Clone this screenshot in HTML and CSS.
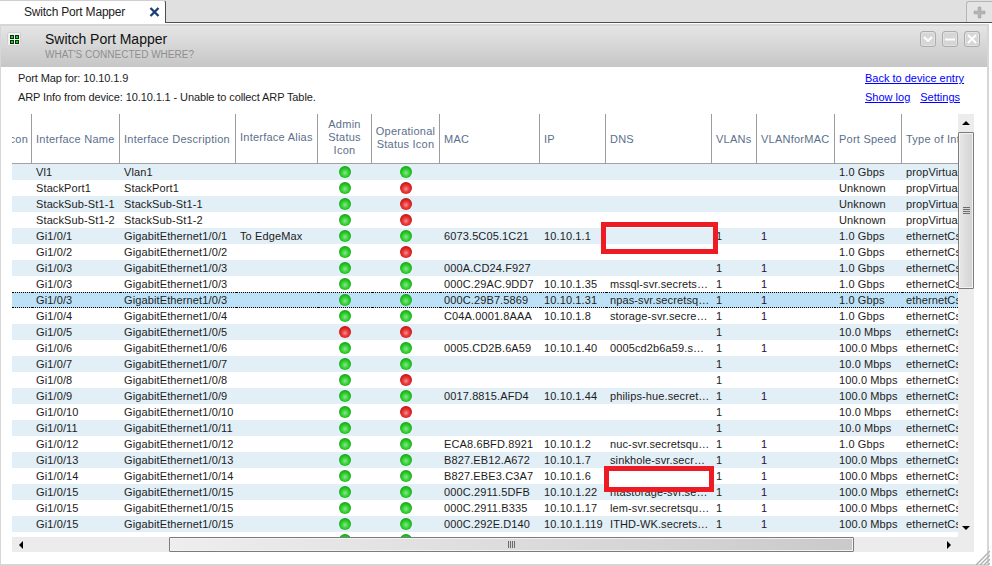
FILE: index.html
```html
<!DOCTYPE html>
<html lang="en">
<head>
<meta charset="utf-8">
<title>Switch Port Mapper</title>
<link rel="stylesheet" href="styles.css">
</head>
<body>
<div class="tabbar">
  <div class="tab"><span class="tab-label">Switch Port Mapper</span>
    <svg class="tab-close" width="11" height="10" viewBox="0 0 11 10"><path d="M1.5 1 9.5 9M9.5 1 1.5 9" stroke="#1d3f78" stroke-width="2.4" fill="none"/></svg>
  </div>
  <div class="tab-add"><svg width="13" height="13" viewBox="0 0 13 13"><path d="M5 1h3v4h4v3H8v4H5V8H1V5h4z" fill="#b4b4b4" stroke="#a0a0a0" stroke-width=".5"/></svg></div>
</div>
<div class="window">
  <header class="head">
    <div class="head-icon"><i></i><i></i><i></i><i></i></div>
    <div class="head-titles">
      <div class="head-title">Switch Port Mapper</div>
      <div class="head-sub">WHAT'S CONNECTED WHERE?</div>
    </div>
    <div class="head-btns">
      <div class="hbtn"><svg width="10" height="6" viewBox="0 0 10 6"><path d="M1 1 5 5 9 1" stroke="#fff" stroke-width="2" fill="none"/></svg></div>
      <div class="hbtn"><svg width="10" height="3" viewBox="0 0 10 3"><path d="M0 1.5h10" stroke="#fff" stroke-width="2"/></svg></div>
      <div class="hbtn"><svg width="10" height="10" viewBox="0 0 10 10"><path d="M1 1 9 9M9 1 1 9" stroke="#fff" stroke-width="2" fill="none"/></svg></div>
    </div>
  </header>
  <main class="content">
    <div class="info">
      <div class="info-left">
        <div>Port Map for: 10.10.1.9</div>
        <div>ARP Info from device: 10.10.1.1 - Unable to collect ARP Table.</div>
      </div>
      <div class="info-right">
        <div><a href="#">Back to device entry</a></div>
        <div class="links-2"><a href="#">Show log</a><a href="#">Settings</a></div>
      </div>
    </div>
    <div class="grid">
      <div class="viewport">
        <table class="ports">
          <colgroup>
            <col class="c0"><col class="c1"><col class="c2"><col class="c3"><col class="c4"><col class="c5"><col class="c6"><col class="c7"><col class="c8"><col class="c9"><col class="c10"><col class="c11"><col class="c12">
          </colgroup>
          <thead>
            <tr>
              <th><div class="clip-left">Status Icon</div></th>
              <th>Interface Name</th>
              <th>Interface Description</th>
              <th class="th-up">Interface Alias</th>
              <th class="ctr">Admin<br>Status<br>Icon</th>
              <th class="ctr">Operational<br>Status Icon</th>
              <th>MAC</th>
              <th>IP</th>
              <th>DNS</th>
              <th>VLANs</th>
              <th>VLANforMAC</th>
              <th>Port Speed</th>
              <th>Type of Interface</th>
            </tr>
          </thead>
          <tbody>
            <tr class="alt"><td></td><td>Vl1</td><td>Vlan1</td><td></td><td class="ctr"><span class="dot g"></span></td><td class="ctr"><span class="dot g"></span></td><td></td><td></td><td></td><td></td><td></td><td>1.0 Gbps</td><td>propVirtual</td></tr>
            <tr><td></td><td>StackPort1</td><td>StackPort1</td><td></td><td class="ctr"><span class="dot g"></span></td><td class="ctr"><span class="dot r"></span></td><td></td><td></td><td></td><td></td><td></td><td>Unknown</td><td>propVirtual</td></tr>
            <tr class="alt"><td></td><td>StackSub-St1-1</td><td>StackSub-St1-1</td><td></td><td class="ctr"><span class="dot g"></span></td><td class="ctr"><span class="dot r"></span></td><td></td><td></td><td></td><td></td><td></td><td>Unknown</td><td>propVirtual</td></tr>
            <tr><td></td><td>StackSub-St1-2</td><td>StackSub-St1-2</td><td></td><td class="ctr"><span class="dot g"></span></td><td class="ctr"><span class="dot r"></span></td><td></td><td></td><td></td><td></td><td></td><td>Unknown</td><td>propVirtual</td></tr>
            <tr class="alt"><td></td><td>Gi1/0/1</td><td>GigabitEthernet1/0/1</td><td>To EdgeMax</td><td class="ctr"><span class="dot g"></span></td><td class="ctr"><span class="dot g"></span></td><td>6073.5C05.1C21</td><td>10.10.1.1</td><td></td><td>1</td><td>1</td><td>1.0 Gbps</td><td>ethernetCsmacd</td></tr>
            <tr><td></td><td>Gi1/0/2</td><td>GigabitEthernet1/0/2</td><td></td><td class="ctr"><span class="dot g"></span></td><td class="ctr"><span class="dot r"></span></td><td></td><td></td><td></td><td></td><td></td><td>1.0 Gbps</td><td>ethernetCsmacd</td></tr>
            <tr class="alt"><td></td><td>Gi1/0/3</td><td>GigabitEthernet1/0/3</td><td></td><td class="ctr"><span class="dot g"></span></td><td class="ctr"><span class="dot g"></span></td><td>000A.CD24.F927</td><td></td><td></td><td>1</td><td>1</td><td>1.0 Gbps</td><td>ethernetCsmacd</td></tr>
            <tr><td></td><td>Gi1/0/3</td><td>GigabitEthernet1/0/3</td><td></td><td class="ctr"><span class="dot g"></span></td><td class="ctr"><span class="dot g"></span></td><td>000C.29AC.9DD7</td><td>10.10.1.35</td><td>mssql-svr.secrets…</td><td>1</td><td>1</td><td>1.0 Gbps</td><td>ethernetCsmacd</td></tr>
            <tr class="sel"><td></td><td>Gi1/0/3</td><td>GigabitEthernet1/0/3</td><td></td><td class="ctr"><span class="dot g"></span></td><td class="ctr"><span class="dot g"></span></td><td>000C.29B7.5869</td><td>10.10.1.31</td><td>npas-svr.secretsq…</td><td>1</td><td>1</td><td>1.0 Gbps</td><td>ethernetCsmacd</td></tr>
            <tr><td></td><td>Gi1/0/4</td><td>GigabitEthernet1/0/4</td><td></td><td class="ctr"><span class="dot g"></span></td><td class="ctr"><span class="dot g"></span></td><td>C04A.0001.8AAA</td><td>10.10.1.8</td><td>storage-svr.secre…</td><td>1</td><td>1</td><td>1.0 Gbps</td><td>ethernetCsmacd</td></tr>
            <tr class="alt"><td></td><td>Gi1/0/5</td><td>GigabitEthernet1/0/5</td><td></td><td class="ctr"><span class="dot r"></span></td><td class="ctr"><span class="dot r"></span></td><td></td><td></td><td></td><td>1</td><td></td><td>10.0 Mbps</td><td>ethernetCsmacd</td></tr>
            <tr><td></td><td>Gi1/0/6</td><td>GigabitEthernet1/0/6</td><td></td><td class="ctr"><span class="dot g"></span></td><td class="ctr"><span class="dot g"></span></td><td>0005.CD2B.6A59</td><td>10.10.1.40</td><td>0005cd2b6a59.s…</td><td>1</td><td>1</td><td>100.0 Mbps</td><td>ethernetCsmacd</td></tr>
            <tr class="alt"><td></td><td>Gi1/0/7</td><td>GigabitEthernet1/0/7</td><td></td><td class="ctr"><span class="dot g"></span></td><td class="ctr"><span class="dot g"></span></td><td></td><td></td><td></td><td>1</td><td></td><td>10.0 Mbps</td><td>ethernetCsmacd</td></tr>
            <tr><td></td><td>Gi1/0/8</td><td>GigabitEthernet1/0/8</td><td></td><td class="ctr"><span class="dot g"></span></td><td class="ctr"><span class="dot r"></span></td><td></td><td></td><td></td><td>1</td><td></td><td>100.0 Mbps</td><td>ethernetCsmacd</td></tr>
            <tr class="alt"><td></td><td>Gi1/0/9</td><td>GigabitEthernet1/0/9</td><td></td><td class="ctr"><span class="dot g"></span></td><td class="ctr"><span class="dot g"></span></td><td>0017.8815.AFD4</td><td>10.10.1.44</td><td>philips-hue.secret…</td><td>1</td><td>1</td><td>100.0 Mbps</td><td>ethernetCsmacd</td></tr>
            <tr><td></td><td>Gi1/0/10</td><td>GigabitEthernet1/0/10</td><td></td><td class="ctr"><span class="dot g"></span></td><td class="ctr"><span class="dot r"></span></td><td></td><td></td><td></td><td>1</td><td></td><td>10.0 Mbps</td><td>ethernetCsmacd</td></tr>
            <tr class="alt"><td></td><td>Gi1/0/11</td><td>GigabitEthernet1/0/11</td><td></td><td class="ctr"><span class="dot g"></span></td><td class="ctr"><span class="dot g"></span></td><td></td><td></td><td></td><td>1</td><td></td><td>10.0 Mbps</td><td>ethernetCsmacd</td></tr>
            <tr><td></td><td>Gi1/0/12</td><td>GigabitEthernet1/0/12</td><td></td><td class="ctr"><span class="dot g"></span></td><td class="ctr"><span class="dot g"></span></td><td>ECA8.6BFD.8921</td><td>10.10.1.2</td><td>nuc-svr.secretsqu…</td><td>1</td><td>1</td><td>1.0 Gbps</td><td>ethernetCsmacd</td></tr>
            <tr class="alt"><td></td><td>Gi1/0/13</td><td>GigabitEthernet1/0/13</td><td></td><td class="ctr"><span class="dot g"></span></td><td class="ctr"><span class="dot g"></span></td><td>B827.EB12.A672</td><td>10.10.1.7</td><td>sinkhole-svr.secr…</td><td>1</td><td>1</td><td>100.0 Mbps</td><td>ethernetCsmacd</td></tr>
            <tr><td></td><td>Gi1/0/14</td><td>GigabitEthernet1/0/14</td><td></td><td class="ctr"><span class="dot g"></span></td><td class="ctr"><span class="dot g"></span></td><td>B827.EBE3.C3A7</td><td>10.10.1.6</td><td></td><td>1</td><td>1</td><td>100.0 Mbps</td><td>ethernetCsmacd</td></tr>
            <tr class="alt"><td></td><td>Gi1/0/15</td><td>GigabitEthernet1/0/15</td><td></td><td class="ctr"><span class="dot g"></span></td><td class="ctr"><span class="dot g"></span></td><td>000C.2911.5DFB</td><td>10.10.1.22</td><td>ntastorage-svr.se…</td><td>1</td><td>1</td><td>100.0 Mbps</td><td>ethernetCsmacd</td></tr>
            <tr><td></td><td>Gi1/0/15</td><td>GigabitEthernet1/0/15</td><td></td><td class="ctr"><span class="dot g"></span></td><td class="ctr"><span class="dot g"></span></td><td>000C.2911.B335</td><td>10.10.1.17</td><td>lem-svr.secretsqu…</td><td>1</td><td>1</td><td>100.0 Mbps</td><td>ethernetCsmacd</td></tr>
            <tr class="alt"><td></td><td>Gi1/0/15</td><td>GigabitEthernet1/0/15</td><td></td><td class="ctr"><span class="dot g"></span></td><td class="ctr"><span class="dot g"></span></td><td>000C.292E.D140</td><td>10.10.1.119</td><td>ITHD-WK.secrets…</td><td>1</td><td>1</td><td>100.0 Mbps</td><td>ethernetCsmacd</td></tr>
            <tr><td></td><td></td><td></td><td></td><td class="ctr"><span class="dot g"></span></td><td class="ctr"><span class="dot g"></span></td><td></td><td></td><td></td><td></td><td></td><td></td><td></td></tr>
          </tbody>
        </table>
      </div>
      <div class="vscroll">
        <div class="sb-btn"><span class="arrow up"></span></div>
        <div class="vthumb"><span class="grip-h"></span></div>
        <div class="sb-fill"></div>
        <div class="sb-btn"><span class="arrow down"></span></div>
      </div>
      <div class="hscroll">
        <div class="sb-btn-h"><span class="arrow left"></span></div>
        <div class="hfill-l"></div>
        <div class="hthumb"><span class="grip-v"></span></div>
        <div class="hfill-r"></div>
        <div class="sb-btn-h"><span class="arrow right"></span></div>
      </div>
      <div class="corner"></div>
    </div>
  </main>
</div>
<div class="redact redact-a"></div>
<div class="redact redact-b"></div>
<svg class="resize" width="15" height="15" viewBox="0 0 15 15"><path d="M15 1 1 15M15 5 5 15M15 9 9 15M15 13 13 15" stroke="#b0b0b0" stroke-width="1.4" fill="none"/></svg>
</body>
</html>
```
FILE: styles.css
```css
* { box-sizing: border-box; }
html, body { margin: 0; padding: 0; }
body {
  position: relative;
  width: 992px;
  height: 566px;
  overflow: hidden;
  background: #fff;
  font-family: "Liberation Sans", Arial, sans-serif;
  font-size: 11px;
  color: #1c1c1c;
}

/* tab strip */
.tabbar {
  height: 23px;
  display: flex;
  justify-content: space-between;
  background: #e0e0e0;
  border-bottom: 1px solid #4e4e4e;
}
.tab {
  width: 166px;
  height: 23px;
  display: flex;
  align-items: center;
  background: #fff;
  border-right: 1px solid #4e4e4e;
  border-top: 1px solid #cfcfcf;
  border-top-right-radius: 3px;
  padding-left: 24px;
}
.tab-label { font-size: 12px; width: 125px; letter-spacing: -.2px; }
.tab-close { display: block; }
.tab-add {
  width: 26px;
  height: 21px;
  margin-top: 1px;
  border: 1px solid #b5b5b5;
  border-right: 0;
  border-bottom: 0;
  border-top-left-radius: 3px;
  background: #e4e4e4;
  display: flex;
  align-items: center;
  justify-content: center;
}

/* window */
.window {
  width: 989px;
  height: 542px;
  border: 2px solid #d6d6d6;
  border-left-width: 1px;
  display: flex;
  flex-direction: column;
  background: #fff;
  margin-top: 1px;
}
.head {
  height: 41px;
  flex: none;
  display: flex;
  background: linear-gradient(#e5e5e5, #c6c6c6);
}
.head-icon {
  width: 14px;
  height: 14px;
  flex: none;
  margin: 6px 0 0 6px;
  display: grid;
  grid-template-columns: 4px 4px;
  grid-template-rows: 4px 4px;
  gap: 1px;
  justify-content: center;
  align-content: center;
  background: #f0f0f0;
  border-radius: 2px;
  box-shadow: inset 0 0 0 1px #cfcfcf;
}
.head-icon i { background: #12d012; outline: 1px solid #0c2f12; outline-offset: -1px; }
.head-titles { margin-left: 24px; padding-top: 5px; flex: 1; }
.head-title { font-size: 14px; line-height: 17px; color: #111; }
.head-sub { font-size: 10px; line-height: 12px; margin-top: 1px; color: #8f8f8f; }
.head-btns { display: flex; gap: 6px; padding: 5px 7px 0 0; }
.hbtn {
  width: 16px;
  height: 16px;
  background: #d6d6d6;
  border: 1px solid #acacac;
  border-radius: 3px;
  box-shadow: inset 0 0 0 1px #e2e2e2;
  display: flex;
  align-items: center;
  justify-content: center;
}

.content {
  flex: 1;
  padding: 0 0 0 11px;
  display: flex;
  flex-direction: column;
}

/* info lines */
.info {
  height: 47px;
  flex: none;
  display: flex;
  justify-content: space-between;
  line-height: 19px;
  padding: 2px 24px 0 6px;
}
.info-left { letter-spacing: -.1px; }
.info-right { width: 98px; white-space: nowrap; }
.info a { color: #0000ff; }
.links-2 { display: flex; justify-content: space-between; width: 95px; }

/* grid and scrollbars */
.grid {
  display: grid;
  grid-template-columns: 946px 16px;
  grid-template-rows: 423px 15px;
}
.viewport { overflow: hidden; }
.ports {
  width: 990px;
  table-layout: fixed;
  border-collapse: separate;
  border-spacing: 0;
}
.c0 { width: 20px; }
.c1 { width: 88px; }
.c2 { width: 116px; }
.c3 { width: 82px; }
.c4 { width: 54px; }
.c5 { width: 68px; }
.c6 { width: 100px; }
.c7 { width: 66px; }
.c8 { width: 106px; }
.c9 { width: 45px; }
.c10 { width: 78px; }
.c11 { width: 67px; }
.c12 { width: 100px; }
.ports th {
  height: 50px;
  padding: 1px 4px 0;
  font-weight: normal;
  text-align: left;
  color: #5b6f8c;
  line-height: 13px;
  letter-spacing: .24px;
  white-space: nowrap;
  overflow: hidden;
  border-right: 1px solid #9c9c9c;
  border-bottom: 1px solid #a2a2a2;
}
.ports th:last-child { border-right: 0; }
.ports th.ctr { text-align: center; padding: 0 0 2px; }
.ports th.th-up { padding-bottom: 4px; }
.clip-left { display: flex; justify-content: flex-end; }
.ports th:first-child { padding: 1px 3px 0 0; }
.ports td {
  height: 16px;
  padding: 0 4px;
  line-height: 14px;
  white-space: nowrap;
  overflow: hidden;
  letter-spacing: .12px;
  vertical-align: middle;
}
.ports td:nth-child(11) { color: #2e0a40; }
.ports td.ctr { text-align: center; padding: 0; font-size: 0; }
.alt td { background: #e2eff7; }
.sel td {
  background: #bde1f6;
  border-top: 1px dotted #000;
  border-bottom: 1px dotted #000;
}
.dot {
  display: inline-block;
  width: 12px;
  height: 12px;
  border-radius: 50%;
  vertical-align: middle;
}
.dot.g { background: radial-gradient(circle 7px at 50% 58%, #86ea86 0, #45d445 40%, #1cbc1c 75%, #10a010 100%); }
.dot.r { background: radial-gradient(circle 7px at 50% 58%, #f59090 0, #ea4242 40%, #d91f1f 75%, #b01212 100%); }

.vscroll {
  display: flex;
  flex-direction: column;
  background: #ececec;
}
.sb-btn { height: 18px; flex: none; display: flex; align-items: center; justify-content: center; }
.vthumb {
  height: 157px;
  flex: none;
  border: 1px solid #7c7c7c;
  border-radius: 1px;
  background: linear-gradient(90deg, #e8e8e8, #d2d2d2);
  box-shadow: inset 0 0 0 1px #f2f2f2;
  display: flex;
  align-items: center;
  justify-content: center;
}
.sb-fill { flex: 1; }
.grip-h {
  width: 7px;
  height: 7px;
  background: repeating-linear-gradient(#6c6c6c 0 1px, #d8d8d8 1px 2px);
}
.grip-v {
  width: 7px;
  height: 7px;
  background: repeating-linear-gradient(90deg, #6c6c6c 0 1px, #d8d8d8 1px 2px);
}
.hscroll {
  display: flex;
  background: #ececec;
}
.sb-btn-h { width: 18px; flex: none; display: flex; align-items: center; justify-content: center; }
.hfill-l { width: 139px; flex: none; }
.hthumb {
  width: 685px;
  flex: none;
  border: 1px solid #7c7c7c;
  border-radius: 1px;
  background: linear-gradient(90deg, #eeeeee, #cacaca);
  box-shadow: inset 0 0 0 1px #f2f2f2;
  display: flex;
  align-items: center;
  justify-content: center;
}
.hfill-r { flex: 1; }
.corner { background: #ececec; }
.arrow { width: 0; height: 0; border-style: solid; border-color: transparent; display: block; }
.arrow.up { border-width: 0 4px 4px; border-bottom-color: #000; }
.arrow.down { border-width: 4px 4px 0; border-top-color: #000; }
.arrow.left { border-width: 4px 4px 4px 0; border-right-color: #000; }
.arrow.right { border-width: 4px 0 4px 4px; border-left-color: #000; }

/* overlays painted over the screenshot */
.redact { position: absolute; border: 5px solid #ed1c24; }
.redact-a { left: 601px; top: 222px; width: 117px; height: 32px; }
.redact-b { left: 604px; top: 466px; width: 110px; height: 26px; background: #fff; }
.resize { position: absolute; left: 975px; top: 550px; }
```
